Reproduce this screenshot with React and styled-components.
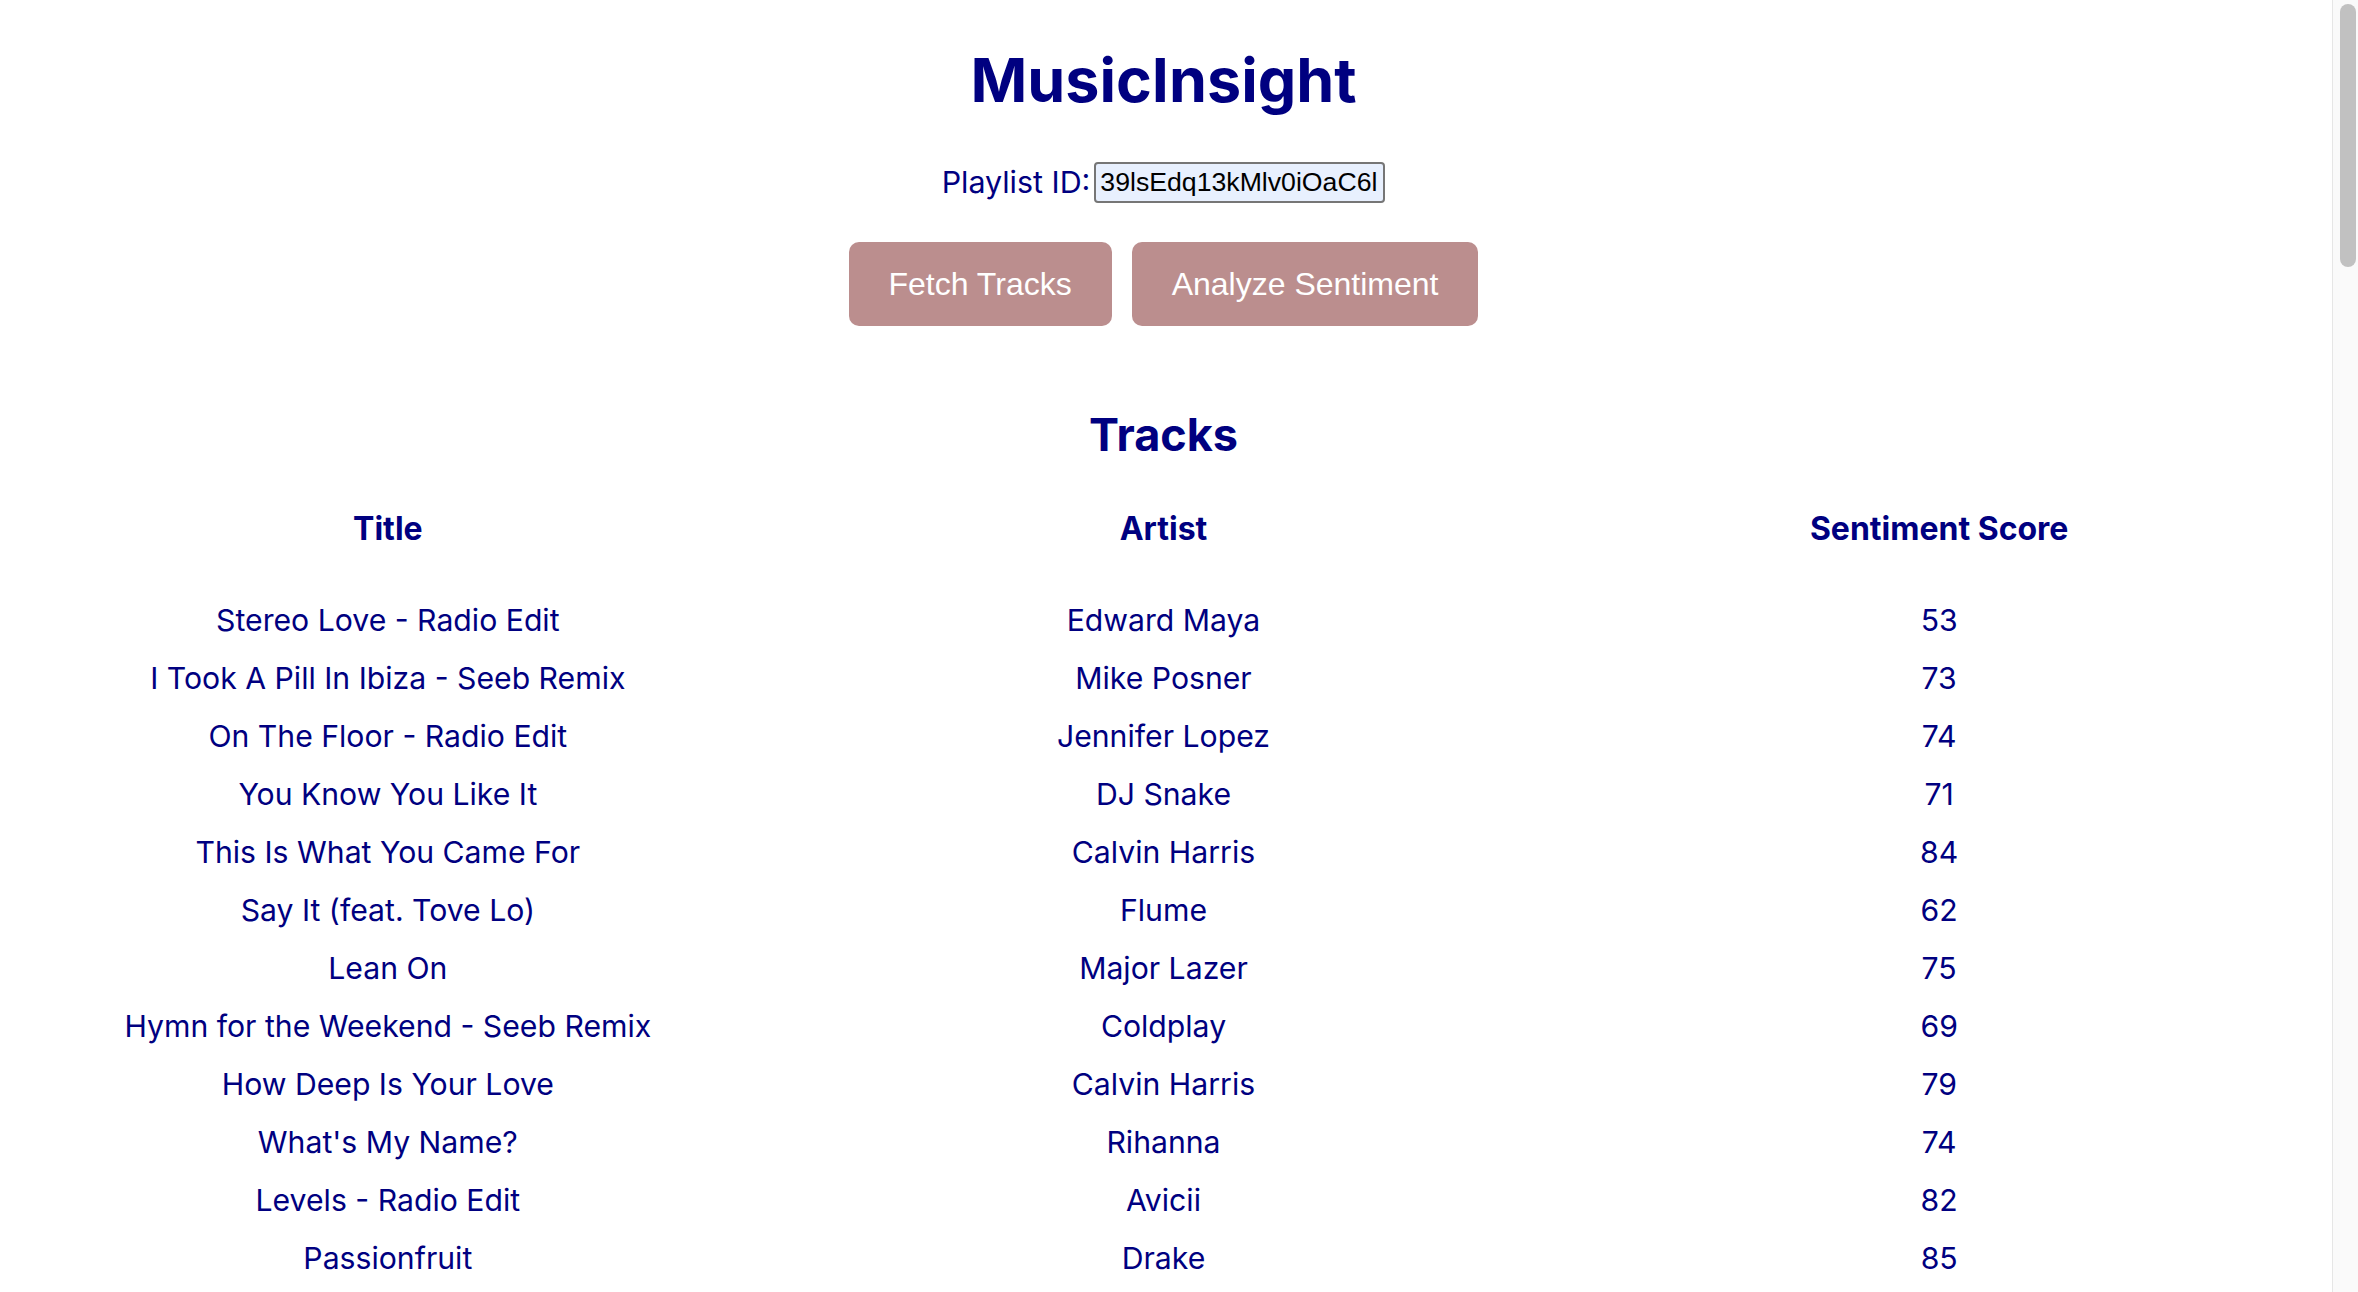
import React from 'react'
import styled, {createGlobalStyle} from 'styled-components'

const GlobalStyle = createGlobalStyle`
	html, body {
		margin: 0;
		padding: 0;
		background: #ffffff;
	}
	body {
		font-family: Inter, 'Noto Sans', sans-serif;
		color: #000080;
	}
`

const Page = styled.div`
	text-align: center;
	padding: 0 31px 120px 0;
`
const Heading = styled.h1`
	font-size: 61px;
	font-weight: 700;
	line-height: 77px;
	margin: 42px 0 41px;
`
const IdRow = styled.div`
	display: flex;
	justify-content: center;
	align-items: center;
	height: 44px;
`
const IdLabel = styled.label`
	font-size: 30.4px;
	line-height: 39px;
	margin-right: 4px;
`
const IdInput = styled.input`
	box-sizing: border-box;
	width: 291px;
	height: 41px;
	padding: 0 4px;
	border: 2px solid #767676;
	border-radius: 4px;
	background: #e8f0fe;
	color: #000000;
	font-family: 'Liberation Sans', Arial, sans-serif;
	font-size: 26.67px;
	outline: none;
`
const ButtonRow = styled.div`
	display: flex;
	justify-content: center;
	gap: 20px;
	margin-top: 38px;
`
const ActionButton = styled.button`
	font-family: 'Liberation Sans', Arial, sans-serif;
	font-size: 32px;
	line-height: 36px;
	padding: 24px 40px;
	color: #ffffff;
	background: #bb8e8e;
	border: none;
	border-radius: 10px;
	cursor: pointer;
`
const SectionTitle = styled.h2`
	font-size: 45px;
	font-weight: 700;
	line-height: 58px;
	margin: 80px 0 36px;
`
const Table = styled.table`
	width: 100%;
	border-collapse: collapse;
	table-layout: fixed;
`
const HeadCell = styled.th`
	font-size: 32px;
	font-weight: 700;
	line-height: 38px;
	padding: 10px 0 43px;
`
const Cell = styled.td`
	font-size: 30.2px;
	line-height: 38px;
	padding: 10px 0;
	white-space: nowrap;
`
const ChartWrap = styled.div`
	display: flex;
	justify-content: center;
	padding-left: 192px;
	margin-top: 40px;
`
const ChartCard = styled.div`
	width: 560px;
	height: 4600px;
	border-radius: 24px;
	background: #ffffff;
	box-shadow: 0 0 40px rgba(0, 0, 0, 0.035);
`

// the window's scrollbar, drawn over the right edge
const ScrollRail = styled.div`
	position: fixed;
	top: 0;
	right: 0;
	width: 26px;
	height: 100vh;
	box-sizing: border-box;
	background: #fafafa;
	border-left: 1px solid #e6e6e6;
`
const ScrollThumb = styled.div`
	position: absolute;
	top: 4px;
	right: 2px;
	width: 16px;
	height: 263px;
	border-radius: 8px;
	background: #c1c1c1;
`

const tracks = [
	['Stereo Love - Radio Edit', 'Edward Maya', 53],
	['I Took A Pill In Ibiza - Seeb Remix', 'Mike Posner', 73],
	['On The Floor - Radio Edit', 'Jennifer Lopez', 74],
	['You Know You Like It', 'DJ Snake', 71],
	['This Is What You Came For', 'Calvin Harris', 84],
	['Say It (feat. Tove Lo)', 'Flume', 62],
	['Lean On', 'Major Lazer', 75],
	['Hymn for the Weekend - Seeb Remix', 'Coldplay', 69],
	['How Deep Is Your Love', 'Calvin Harris', 79],
	["What's My Name?", 'Rihanna', 74],
	['Levels - Radio Edit', 'Avicii', 82],
	['Passionfruit', 'Drake', 85],
]

export default function App(){
	const [playlistId, setPlaylistId] = React.useState('39lsEdq13kMlv0iOaC6l')
	return(
		<Page>
			<GlobalStyle />
			<Heading>MusicInsight</Heading>
			<IdRow>
				<IdLabel htmlFor = "playlist">Playlist ID:</IdLabel>
				<IdInput
					id = "playlist"
					value = {playlistId}
					onChange = {(e) => setPlaylistId(e.target.value)}
				/>
			</IdRow>
			<ButtonRow>
				<ActionButton>Fetch Tracks</ActionButton>
				<ActionButton>Analyze Sentiment</ActionButton>
			</ButtonRow>

			<SectionTitle>Tracks</SectionTitle>
			<Table>
				<thead>
					<tr>
						<HeadCell>Title</HeadCell>
						<HeadCell>Artist</HeadCell>
						<HeadCell>Sentiment Score</HeadCell>
					</tr>
				</thead>
				<tbody>
					{tracks.map(([title, artist, score]) => (
						<tr key = {title}>
							<Cell>{title}</Cell>
							<Cell>{artist}</Cell>
							<Cell>{score}</Cell>
						</tr>
					))}
				</tbody>
			</Table>

			<ChartWrap>
				<ChartCard />
			</ChartWrap>

			<ScrollRail>
				<ScrollThumb />
			</ScrollRail>
		</Page>
	)
}
